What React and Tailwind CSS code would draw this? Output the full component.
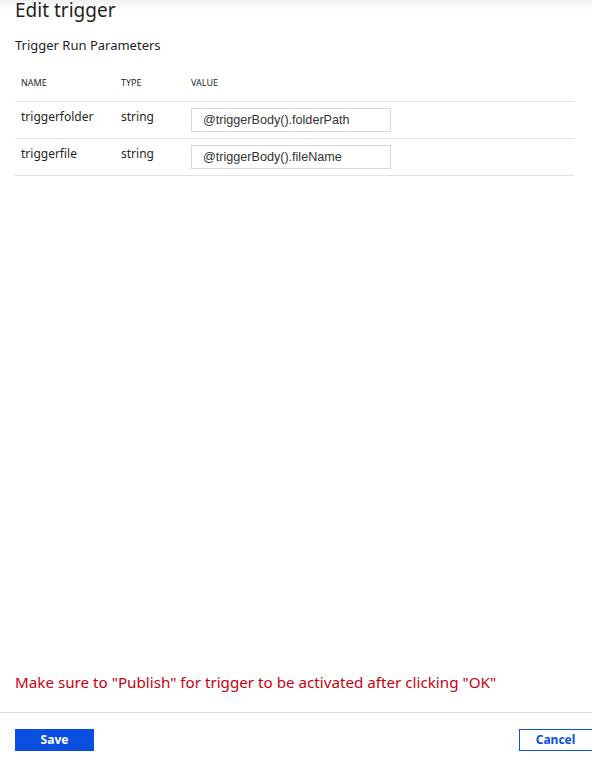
export default function App() {
  const rows = [
    { name: "triggerfolder", type: "string", value: "@triggerBody().folderPath" },
    { name: "triggerfile", type: "string", value: "@triggerBody().fileName" },
  ];
  const font = { fontFamily: '"Noto Sans", "Open Sans", sans-serif' };
  return (
    <div className="relative w-[592px] h-[763px] bg-white overflow-hidden text-[#1f1f1f]" style={font}>
      <div className="absolute inset-x-0 top-0 h-[10px] bg-gradient-to-b from-[#f0f0f0] to-white" />
      <div className="relative flex flex-col h-full">
        <h1 className="pl-[15px] text-[19px] leading-[20px] font-normal">Edit trigger</h1>
        <div className="pl-[15px] mt-[16px] text-[13px] leading-[18px]">Trigger Run Parameters</div>
        <div className="mx-[15px] mt-[13px] w-[559px]">
          <div className="flex items-center h-[22px] text-[9px] uppercase pl-[6px] mt-[5px]">
            <div className="w-[100px]">Name</div>
            <div className="w-[70px]">Type</div>
            <div>Value</div>
          </div>
          <div className="mt-[7px] border-t border-[#e1e1e1]">
            {rows.map((r) => (
              <div key={r.name} className="flex items-center h-[37px] border-b border-[#e1e1e1] pl-[6px] text-[12px]">
                <div className="w-[100px] -mt-[6px]">{r.name}</div>
                <div className="w-[70px] -mt-[6px]">{r.type}</div>
                <div className="w-[200px] h-[24px] border border-[#d8d8d8] pl-[11px] flex items-center text-[12.6px] text-[#333]" style={{ fontFamily: '"Liberation Sans", Arial, sans-serif' }}>
                  {r.value}
                </div>
              </div>
            ))}
          </div>
        </div>
        <div className="flex-1" />
        <div className="pl-[15px] text-[15.2px] leading-[20px] text-[#c8000f] mb-[20px]">
          Make sure to "Publish" for trigger to be activated after clicking "OK"
        </div>
        <div className="border-t border-[#dcdcdc]" />
        <div className="flex justify-between items-start pt-[16px] h-[50px]">
          <button className="ml-[15px] w-[79px] h-[22px] bg-[#0b4fe0] text-white text-[12px] font-bold leading-none">Save</button>
          <button className="-mr-[10px] w-[83px] h-[22px] border border-[#0b4fe0] text-[#0b4fe0] text-[12px] font-bold leading-none pr-[10px]">Cancel</button>
        </div>
      </div>
    </div>
  );
}
